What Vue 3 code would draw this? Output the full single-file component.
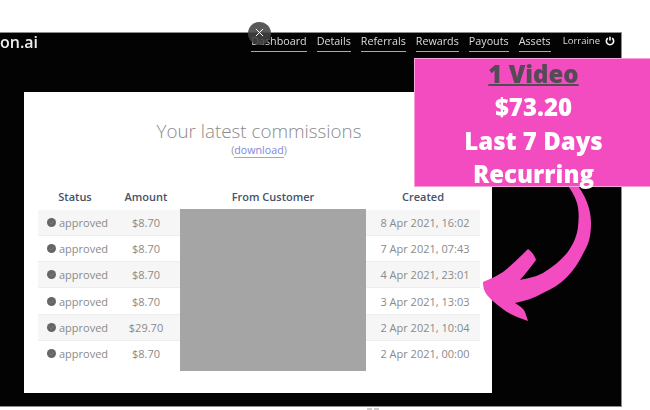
<script setup>
const navItems = ['Dashboard', 'Details', 'Referrals', 'Rewards', 'Payouts', 'Assets']
const rows = [
  { amount: '$8.70', created: '8 Apr 2021, 16:02' },
  { amount: '$8.70', created: '7 Apr 2021, 07:43' },
  { amount: '$8.70', created: '4 Apr 2021, 23:01' },
  { amount: '$8.70', created: '3 Apr 2021, 13:03' },
  { amount: '$29.70', created: '2 Apr 2021, 10:04' },
  { amount: '$8.70', created: '2 Apr 2021, 00:00' },
]
</script>

<template>
  <div class="page">
    <div class="frame">
      <header class="topbar">
        <div class="logo">on.ai</div>
        <nav class="nav">
          <a v-for="item in navItems" :key="item" class="nav-link">{{ item }}</a>
          <span class="user">Lorraine</span>
          <svg class="power" viewBox="0 0 12 12" width="10" height="10">
            <path d="M3.4 2.6a4.4 4.4 0 1 0 5.2 0" fill="none" stroke="#fff" stroke-width="1.9" />
            <path d="M6 1v4.4" stroke="#fff" stroke-width="1.9" />
          </svg>
        </nav>
      </header>
      <main class="card">
        <h1 class="title">Your latest commissions</h1>
        <div class="sub">(<a class="dl">download</a>)</div>
        <div class="table">
          <div class="row head">
            <div>Status</div>
            <div>Amount</div>
            <div>From Customer</div>
            <div>Created</div>
          </div>
          <div class="body">
            <div v-for="(r, i) in rows" :key="i" class="row data">
              <div class="c-status">
                <svg class="dot" viewBox="0 0 10 10" width="9" height="9">
                  <circle cx="5" cy="5" r="5" fill="#666" />
                  <path d="M2.8 5.2l1.6 1.5 2.9-3.2" fill="none" stroke="#7d7d7d" stroke-width="1" />
                </svg>
                approved
              </div>
              <div>{{ r.amount }}</div>
              <div></div>
              <div class="c-created">{{ r.created }}</div>
            </div>
            <div class="redact"></div>
          </div>
        </div>
      </main>
    </div>

    <svg class="arrow" viewBox="0 0 650 410" width="650" height="410">
      <path fill="#f24cc0" d="M566 183 L576 183 C585 195 591 208 591 223 C591 235 589 243 585 250 C579 262 574 270 567 277 C560 284 552 289 543 293 C534 298 525 301 515 303 C520 306 524 309 525 312 L528 321 C520 318 514 316 507 312 C500 307 493 302 487 295 C484 291 483 287 483 282 C490 279 497 276 503 272 C512 265 520 257 528 249 C532 252 535 256 536 260 C531 267 526 273 520 280 C528 278 536 277 543 273 C553 267 561 260 567 253 C573 245 577 236 578 227 C579 218 579 210 577 203 C575 196 571 190 566 183 Z" />
    </svg>

    <aside class="banner">
      <div class="b-head">1 Video</div>
      <div>$73.20</div>
      <div>Last 7 Days</div>
      <div>Recurring</div>
    </aside>

    <button class="close">
      <svg viewBox="0 0 10 10" width="9" height="9">
        <path d="M1 1l8 8M9 1l-8 8" stroke="#fff" stroke-width="1.1" />
      </svg>
    </button>

    <span class="speck one"></span>
    <span class="speck two"></span>
  </div>
</template>

<style>
html, body { margin: 0; background: #fff; overflow: hidden; }
</style>

<style scoped>
.page {
  position: relative;
  width: 650px;
  height: 410px;
  padding-top: 32px;
  box-sizing: border-box;
  overflow: hidden;
  background: #fff;
  font-family: "Open Sans", sans-serif;
}
.frame {
  width: 622px;
  height: 375px;
  box-sizing: border-box;
  background: #030303;
  border: 1px solid #8c8c8c;
  border-left: 0;
  display: flex;
  flex-direction: column;
  filter: blur(0.45px);
}
.topbar {
  height: 59px;
  display: flex;
  justify-content: space-between;
  align-items: flex-start;
  flex: none;
}
.logo {
  color: #eee;
  font-weight: 600;
  font-size: 16px;
  line-height: 19px;
}
.nav {
  display: flex;
  align-items: flex-start;
  margin-right: 6px;
}
.nav-link {
  color: #ddd;
  font-size: 10.75px;
  line-height: 16px;
  padding-bottom: 2px;
  margin-right: 10px;
  border-bottom: 1px solid #aaa;
}
.user {
  color: #ddd;
  font-size: 9.5px;
  line-height: 16px;
  margin-left: 2px;
  margin-right: 5px;
}
.power { margin-top: 3px; }
.card {
  width: 468px;
  height: 301px;
  margin-left: 24px;
  background: #fff;
  box-sizing: border-box;
  display: flex;
  flex-direction: column;
  padding: 28px 12px 0 14px;
}
.title {
  margin: 0;
  font-weight: 300;
  font-size: 18.8px;
  line-height: 22px;
  color: #8a8a8a;
  text-align: center;
}
.sub {
  margin-top: 2px;
  font-size: 10.7px;
  line-height: 13px;
  color: #999;
  text-align: center;
}
.dl {
  color: #7c88d8;
  border-bottom: 1px solid #9aa4ee;
}
.table { margin-top: 27px; }
.row {
  display: grid;
  grid-template-columns: 74px 68px 186px 114px;
  align-items: center;
  font-size: 11px;
  text-align: center;
}
.head {
  height: 24px;
  color: #44526a;
  font-weight: 600;
}
.body { position: relative; margin-top: 2px; }
.data {
  height: 26.17px;
  box-sizing: border-box;
  color: #8a8a8a;
  border-bottom: 1px solid #eee;
}
.data:nth-child(odd) { background: #f6f6f6; }
.data:nth-child(6) { border-bottom: 0; }
.c-status {
  display: flex;
  align-items: center;
  gap: 3px;
  padding-left: 9px;
}
.c-created { padding-left: 4px; }
.dot { flex: none; }
.redact {
  position: absolute;
  left: 142px;
  top: -1px;
  width: 186px;
  height: 162px;
  background: #a5a5a5;
}
.banner {
  position: absolute;
  left: 414px;
  top: 58px;
  width: 238px;
  height: 129px;
  box-sizing: border-box;
  background: #f24cc0;
  border: 1px solid #f9a0dd;
  border-right: 0;
  color: #fff;
  font-weight: 800;
  font-size: 24px;
  line-height: 33.3px;
  text-align: center;
  filter: blur(0.3px);
}
.banner > div { transform: translateY(-2px); }
.b-head {
  color: #554a55;
  text-decoration: underline;
  text-decoration-thickness: 2px;
}
.arrow {
  position: absolute;
  left: 0;
  top: 0;
  pointer-events: none;
  filter: blur(0.3px);
}
.close {
  position: absolute;
  left: 248px;
  top: 22px;
  width: 23px;
  height: 23px;
  padding: 0;
  border: 0;
  border-radius: 50%;
  background: rgba(66, 66, 66, 0.88);
  display: flex;
  align-items: center;
  justify-content: center;
}
.close svg { margin-top: -2px; }
.speck {
  position: absolute;
  top: 408px;
  width: 5px;
  height: 2px;
  background: #ccc;
}
.one { left: 367px; }
.two { left: 374px; }
</style>
